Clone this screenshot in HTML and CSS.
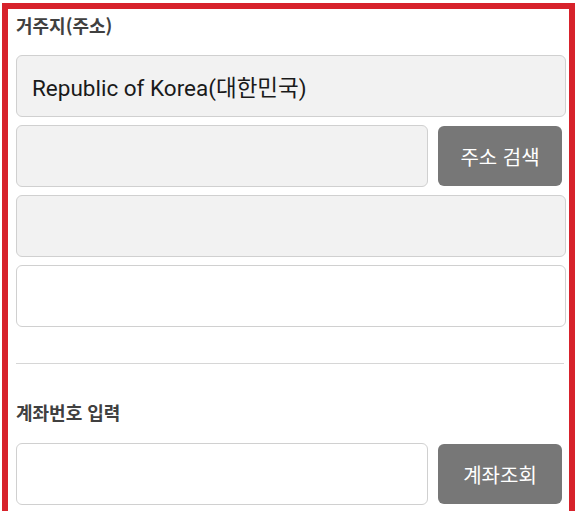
FILE: index.html
```html
<!DOCTYPE html>
<html lang="ko">
<head>
<meta charset="utf-8">
<link rel="stylesheet" href="styles.css">
</head>
<body>
<div class="frame">
  <section class="group">
    <h2 class="label">거주지(주소)</h2>
    <div class="field grey"><span class="value">Republic of Korea(대한민국)</span></div>
    <div class="row">
      <div class="field grey grow"></div>
      <button class="btn">주소 검색</button>
    </div>
    <div class="field grey"></div>
    <div class="field"></div>
  </section>
  <hr class="divider">
  <section class="group second">
    <h2 class="label">계좌번호 입력</h2>
    <div class="row">
      <div class="field grow"></div>
      <button class="btn">계좌조회</button>
    </div>
  </section>
</div>
</body>
</html>
```

FILE: styles.css
```css
html, body {
  margin: 0;
  padding: 0;
  background: #ffffff;
  height: 100%;
  overflow: hidden;
}
body {
  font-family: Roboto, "Noto Sans CJK KR", sans-serif;
}
.frame {
  margin: 3px 0 0 2px;
  width: 550px;
  height: 510px;
  border: 6px solid #d7222b;
  padding: 6px 3px 0 8px;
  box-sizing: content-box;
}
.group {
  display: flex;
  flex-direction: column;
  gap: 8px;
}
.label {
  margin: 0 0 12px 0;
  font-family: "Noto Sans CJK KR", sans-serif;
  font-size: 18px;
  font-weight: 700;
  line-height: 20px;
  height: 20px;
  color: #404040;
}
.field {
  height: 62px;
  box-sizing: border-box;
  border: 1px solid #d0d0d0;
  border-radius: 6px;
  background: #ffffff;
  display: flex;
  align-items: center;
  padding: 0 15px;
}
.field.grey {
  background: #f2f2f2;
}
.value {
  font-size: 22.5px;
  color: #1a1a1a;
}
.row {
  display: flex;
  gap: 10px;
  align-items: center;
}
.grow {
  flex: 1;
}
.btn {
  width: 124px;
  height: 60px;
  margin-right: 4px;
  border: none;
  border-radius: 6px;
  background: #777777;
  color: #ffffff;
  font-family: "Noto Sans CJK KR", sans-serif;
  font-size: 20px;
}
.divider {
  margin: 36px 2px 38px 0;
  border: none;
  border-top: 1px solid #d6d6d6;
}
.second .label {
  margin-bottom: 13px;
}
```
